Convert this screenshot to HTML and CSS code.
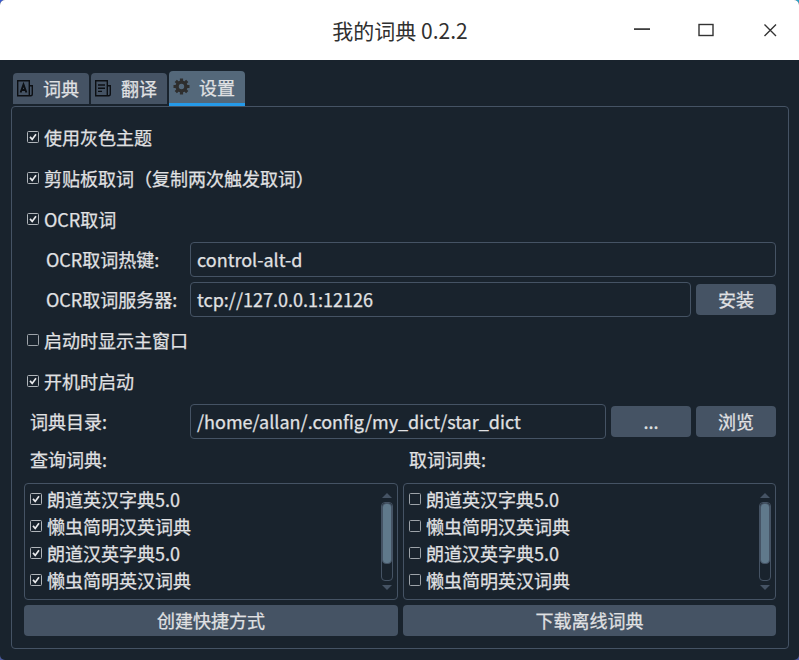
FILE: index.html
```
<!DOCTYPE html>
<html lang="zh-CN">
<head>
<meta charset="utf-8">
<title>我的词典 0.2.2</title>
<link rel="stylesheet" href="styles.css">
</head>
<body>
<svg width="0" height="0" class="defs">
  <symbol id="check" viewBox="0 0 13 13"><rect x=".5" y="1.5" width="11" height="11" rx="1" fill="none" stroke="#b0b5ba"/><path d="M3 6.9 5.2 9.4 9 4.2" fill="none" stroke="#e8e9eb" stroke-width="1.7"/></symbol>
  <symbol id="empty" viewBox="0 0 13 13"><rect x=".5" y="1.5" width="11" height="11" rx="1" fill="none" stroke="#9da3a9"/></symbol>
</svg>
<div class="window">
  <header class="titlebar">
    <h1>我的词典 0.2.2</h1>
    <div class="controls">
      <svg width="16" height="16"><path d="M0 7.1h16" stroke="#333" stroke-width="1.7"/></svg>
      <svg width="16" height="16"><rect x="1" y="2.5" width="14" height="11" fill="none" stroke="#333" stroke-width="1.4"/></svg>
      <svg width="16" height="16"><path d="M2.5 2.5l11.5 11.5M14 2.5 2.5 14" stroke="#333" stroke-width="1.4"/></svg>
    </div>
  </header>
  <nav class="tabs">
    <div class="tab"><svg width="17" height="17" fill="none" stroke="#0c0f13" stroke-width="1.4"><path d="M.7.7h11.6v15H.7zM12.3 5.7h3v8.5q0 1.5-1.5 1.5h-1.5"/><path d="M3.6 12.5 6.5 4.5l2.9 8M4.5 10h4" stroke-width="1.9"/></svg><span>词典</span></div>
    <div class="tab"><svg width="17" height="17" fill="none" stroke="#0c0f13" stroke-width="1.4"><path d="M.7.7h11.6v15H.7zM12.3 5.7h3v8.5q0 1.5-1.5 1.5h-1.5M3 5h7M3 8.2h7M3 11.4h4"/></svg><span>翻译</span></div>
    <div class="tab active"><svg width="17" height="17" viewBox="-8.5 -8.5 17 17"><circle r="4.4" fill="none" stroke="#2e2e2e" stroke-width="3.4"/><path d="M0-8V-5M0 8V5M-8 0h3M8 0H5M-5.7-5.7l2 2M5.7 5.7l-2-2M-5.7 5.7l2-2M5.7-5.7l-2 2" stroke="#2e2e2e" stroke-width="3.2"/></svg><span>设置</span></div>
  </nav>
  <main class="panel">
    <label class="option"><svg><use href="#check"/></svg>使用灰色主题</label>
    <label class="option"><svg><use href="#check"/></svg>剪贴板取词（复制两次触发取词）</label>
    <label class="option"><svg><use href="#check"/></svg>OCR取词</label>
    <div class="field indent"><span>OCR取词热键:</span><div class="input">control-alt-d</div></div>
    <div class="field indent"><span>OCR取词服务器:</span><div class="input">tcp://127.0.0.1:12126</div><div class="button">安装</div></div>
    <div class="startup">
      <label class="option"><svg><use href="#empty"/></svg>启动时显示主窗口</label>
      <label class="option"><svg><use href="#check"/></svg>开机时启动</label>
    </div>
    <div class="field"><span>词典目录:</span><div class="input">/home/allan/.config/my_dict/star_dict</div><div class="button">...</div><div class="button">浏览</div></div>
    <div class="dictionaries">
      <section>
        <h2>查询词典:</h2>
        <div class="list">
          <ul>
            <li><svg><use href="#check"/></svg>朗道英汉字典5.0</li>
            <li><svg><use href="#check"/></svg>懒虫简明汉英词典</li>
            <li><svg><use href="#check"/></svg>朗道汉英字典5.0</li>
            <li><svg><use href="#check"/></svg>懒虫简明英汉词典</li>
          </ul>
          <div class="scroll"><i class="up"></i><div class="track"><div class="thumb"></div></div><i class="down"></i></div>
        </div>
        <div class="button">创建快捷方式</div>
      </section>
      <section>
        <h2>取词词典:</h2>
        <div class="list">
          <ul>
            <li><svg><use href="#empty"/></svg>朗道英汉字典5.0</li>
            <li><svg><use href="#empty"/></svg>懒虫简明汉英词典</li>
            <li><svg><use href="#empty"/></svg>朗道汉英字典5.0</li>
            <li><svg><use href="#empty"/></svg>懒虫简明英汉词典</li>
          </ul>
          <div class="scroll"><i class="up"></i><div class="track"><div class="thumb"></div></div><i class="down"></i></div>
        </div>
        <div class="button">下载离线词典</div>
      </section>
    </div>
  </main>
</div>
</body>
</html>
```
FILE: styles.css
```
* { box-sizing: border-box; margin: 0; padding: 0; }
body {
  height: 660px;
  overflow: hidden;
  background: linear-gradient(90deg, #3b5bd0 50%, #21a5d0 50%) top / 100% 50% no-repeat, #4c5a9c;
  font: 18px/26px "Noto Sans CJK SC", sans-serif;
  color: #e0e1e3;
}
svg { display: block; flex: none; }
.defs { display: none; }
.window { height: 660px; border-radius: 5px; overflow: hidden; background: #19232d; }
.titlebar {
  height: 60px;
  background: #fff;
  color: #303030;
  display: grid;
  grid-template-columns: 1fr auto 1fr;
  align-items: center;
}
.titlebar h1 { grid-column: 2; font-size: 21px; font-weight: 400; line-height: 30px; padding: 0 0 1px 1px; }
.controls { display: flex; gap: 48px; justify-self: end; padding-right: 21px; }
.tabs { display: flex; gap: 2px; height: 46px; padding: 11px 13px 0; -webkit-text-stroke: 0.25px; }
.tab {
  display: flex;
  width: 76px;
  height: 31px;
  margin-top: 2px;
  padding: 2px 0 0 4px;
  gap: 9px;
  background: #455364;
  border-radius: 4px 4px 0 0;
}
.tab svg { margin-top: 5px; }
.tab.active { height: 35px; margin-top: 0; background: #54687a; border-bottom: 3px solid #259ae9; padding-top: 3px; }
.tab.active svg { margin-top: 4px; }
.panel {
  width: 778px;
  height: 543px;
  margin-left: 11px;
  padding: 10px 12px;
  border: 1px solid #455364;
  border-radius: 4px;
  -webkit-text-stroke: 0.25px;
}
.option { display: flex; align-items: center; height: 41px; padding: 0 0 2px 3px; gap: 4px; }
.option svg, .list li svg { width: 13px; height: 13px; }
.field { display: flex; align-items: center; gap: 5px; height: 35px; margin-top: 2px; }
.field > span { width: 161px; padding: 0 0 2px 6px; white-space: nowrap; }
.field.indent > span { padding-left: 22px; }
.field + .field { margin-top: 5px; }
.startup { margin-top: 3px; }
.input { flex: 1; height: 35px; border: 1px solid #455364; border-radius: 4px; padding: 3px 6px; }
.button { height: 31px; width: 80px; border-radius: 4px; background: #455364; text-align: center; line-height: 31px; }
.dictionaries { display: grid; grid-template-columns: 374px 373px; gap: 5px; }
.dictionaries h2 { font-size: 18px; font-weight: 400; height: 44px; line-height: 40px; padding-left: 6px; }
.dictionaries .button { width: 100%; margin-top: 5px; }
.list { display: flex; justify-content: space-between; height: 117px; border: 1px solid #455364; border-radius: 4px; padding: 1px 4px 3px 5px; }
.list ul { list-style: none; }
.list li { display: flex; align-items: center; height: 27px; gap: 4px; }
.scroll { width: 12px; display: flex; flex-direction: column; align-items: center; padding-top: 8px; }
.track { width: 12px; height: 79px; margin: 4px 0; border: 1px solid #455364; border-radius: 4px; }
.thumb { height: 61px; background: #60798b; border: 1px solid #455364; border-radius: 4px; }
.up, .down { border: 5px solid transparent; }
.up { border-top: 0; border-bottom-color: #455364; }
.down { border-bottom: 0; border-top-color: #455364; }
```
